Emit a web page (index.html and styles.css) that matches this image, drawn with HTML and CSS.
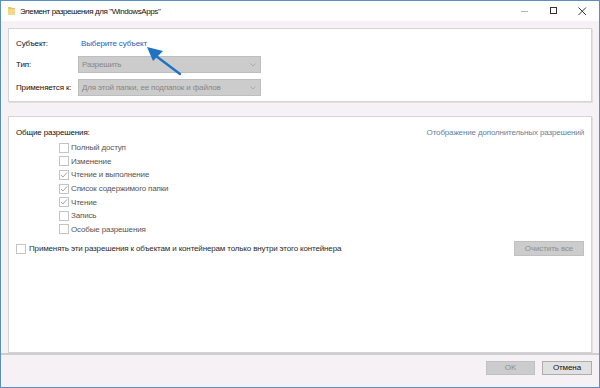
FILE: index.html
```html
<!DOCTYPE html>
<html lang="ru">
<head>
    <meta charset="UTF-8">
    <title>Элемент разрешения для "WindowsApps"</title>
    <link rel="stylesheet" href="styles.css">
</head>
<body>
<div class="window">
    <div class="titlebar">
        <svg class="folder" width="7" height="9" viewBox="0 0 7 9">
            <path d="M0 1 H3 L4 2 H7 V9 H0 Z" fill="#e9c46a"/>
            <path d="M0 3 H7 V9 H0 Z" fill="#f3d88c"/>
        </svg>
        <span class="title">Элемент разрешения для "WindowsApps"</span>
        <div class="controls">
            <span class="ctl">
                <svg width="8" height="8" viewBox="0 0 8 8"><path d="M0 4.5 H7" stroke="#b4b4b4" stroke-width="1"/></svg>
            </span>
            <span class="ctl">
                <svg width="8" height="8" viewBox="0 0 8 8"><rect x="0.5" y="0.5" width="6" height="6" fill="none" stroke="#333" stroke-width="1"/></svg>
            </span>
            <span class="ctl close">
                <svg width="9" height="9" viewBox="0 0 9 9"><path d="M0.5 0.5 L8 8 M8 0.5 L0.5 8" stroke="#333" stroke-width="1"/></svg>
            </span>
        </div>
    </div>

    <div class="content">
        <div class="panel panel-top">
            <div class="row row-first">
                <span class="label">Субъект:</span>
                <a class="link" href="#">Выберите субъект</a>
            </div>
            <div class="row">
                <span class="label">Тип:</span>
                <div class="select">
                    <span>Разрешить</span>
                    <svg width="6" height="4" viewBox="0 0 6 4"><path d="M0.5 0.5 L3 3 L5.5 0.5" fill="none" stroke="#a6a6a6" stroke-width="0.9"/></svg>
                </div>
            </div>
            <div class="row">
                <span class="label">Применяется к:</span>
                <div class="select">
                    <span>Для этой папки, ее подпапок и файлов</span>
                    <svg width="6" height="4" viewBox="0 0 6 4"><path d="M0.5 0.5 L3 3 L5.5 0.5" fill="none" stroke="#a6a6a6" stroke-width="0.9"/></svg>
                </div>
            </div>
        </div>

        <div class="panel panel-perms">
            <div class="perm-head">
                <span class="label">Общие разрешения:</span>
                <a class="link-muted" href="#">Отображение дополнительных разрешений</a>
            </div>
            <ul class="checks">
                <li><span class="box"></span>Полный доступ</li>
                <li><span class="box"></span>Изменение</li>
                <li><span class="box checked"><svg width="8" height="8" viewBox="0 0 8 8"><path d="M1 4 L3 6 L7 1.5" fill="none" stroke="#9a9a9a" stroke-width="0.9"/></svg></span>Чтение и выполнение</li>
                <li><span class="box checked"><svg width="8" height="8" viewBox="0 0 8 8"><path d="M1 4 L3 6 L7 1.5" fill="none" stroke="#9a9a9a" stroke-width="0.9"/></svg></span>Список содержимого папки</li>
                <li><span class="box checked"><svg width="8" height="8" viewBox="0 0 8 8"><path d="M1 4 L3 6 L7 1.5" fill="none" stroke="#9a9a9a" stroke-width="0.9"/></svg></span>Чтение</li>
                <li><span class="box"></span>Запись</li>
                <li><span class="box"></span>Особые разрешения</li>
            </ul>
            <div class="apply-row">
                <label class="apply"><span class="box"></span>Применять эти разрешения к объектам и контейнерам только внутри этого контейнера</label>
                <button class="btn btn-disabled btn-clear">Очистить все</button>
            </div>
        </div>
    </div>

    <div class="footer">
        <button class="btn btn-disabled btn-ok">OK</button>
        <button class="btn btn-cancel">Отмена</button>
    </div>

    <!-- стрелка-подсказка поверх окна -->
    <svg class="arrow" width="40" height="34" viewBox="0 0 40 34">
        <path d="M33 27 L9 9" stroke="#1f73c3" stroke-width="2.4" stroke-linecap="round"/>
        <path d="M0 0 L16 4 L6 14 Z" fill="#1f73c3"/>
    </svg>
</div>
</body>
</html>
```

FILE: styles.css
```css
/* окно свойств безопасности */
body {
    margin: 0;
    font-family: "Liberation Sans", Arial, sans-serif;
    font-size: 8px;
    letter-spacing: -0.15px;
    color: #111;
}

.window {
    position: relative;
    width: 600px;
    height: 388px;
    box-sizing: border-box;
    border: 1px solid #5a8fc2;
    background-color: #f5f1f5;
    display: flex;
    flex-direction: column;
}

.titlebar {
    height: 20px;
    background-color: #ffffff;
    display: flex;
    align-items: center;
    padding-left: 7px;
}

.folder {
    margin-right: 5px;
    margin-top: -1px;
}

.title {
    color: #111;
    letter-spacing: -0.4px;
}

.controls {
    margin-left: auto;
    display: flex;
    align-items: center;
    height: 100%;
}

.ctl {
    width: 29px;
    display: flex;
    justify-content: center;
    align-items: center;
}

.ctl.close {
    margin-right: 2px;
}

.content {
    padding: 7px 7px 0 7px;
    height: 332px;
    box-sizing: border-box;
}

.panel {
    background-color: #ffffff;
    border: 1px solid #d4d4d4;
    box-shadow: 1px 1px 0 #e2dee2;
}

.panel-top {
    height: 74px;
    box-sizing: border-box;
    padding: 6px 7px 0 7px;
}

.row {
    display: flex;
    align-items: center;
    height: 17px;
    margin-bottom: 6px;
    white-space: nowrap;
}

.row-first {
    margin-bottom: 4px;
}

.label {
    width: 62px;
    flex-shrink: 0;
    color: #111;
    white-space: nowrap;
}

.link {
    color: #1a64b6;
    text-decoration: none;
    margin-left: 3px;
}

.select {
    width: 183px;
    height: 17px;
    box-sizing: border-box;
    background-color: #cccccc;
    border: 1px solid #bebebe;
    color: #878787;
    display: flex;
    align-items: center;
    justify-content: space-between;
    padding: 0 4px 0 3px;
}

.panel-perms {
    margin-top: 14px;
    height: 237px;
    box-sizing: border-box;
    padding: 9px 7px 0 7px;
}

.perm-head {
    display: flex;
    justify-content: space-between;
    align-items: center;
    height: 13px;
}

.perm-head .label {
    width: auto;
}

.link-muted {
    color: #6a7f98;
    text-decoration: none;
}

.checks {
    list-style: none;
    margin: 2px 0 0 0;
    padding: 0 0 0 43px;
}

.checks li {
    height: 13.6px;
    display: flex;
    align-items: center;
    color: #555;
}

.box {
    width: 8px;
    height: 8px;
    border: 1px solid #c4c4c4;
    background-color: #ffffff;
    margin-right: 2px;
    display: inline-flex;
    align-items: center;
    justify-content: center;
    flex-shrink: 0;
}

.box svg {
    display: block;
}

.apply-row {
    display: flex;
    align-items: center;
    justify-content: space-between;
    margin-top: 5px;
    height: 15px;
}

.apply {
    display: flex;
    align-items: center;
    color: #2a2a2a;
}

.apply .box {
    margin-right: 3px;
}

.btn {
    font-family: inherit;
    font-size: 8px;
    letter-spacing: -0.1px;
    height: 14px;
    padding: 0;
    box-sizing: border-box;
    border: 1px solid #adadad;
    background-color: #e1e1e1;
    color: #111;
    line-height: 12px;
}

.btn-disabled {
    background-color: #cccccc;
    border-color: #c0c0c0;
    color: #8e8e8e;
}

.btn-clear {
    width: 70px;
    height: 15px;
}

.footer {
    flex: 1;
    border-top: 2px solid #d0cdd0;
    display: flex;
    justify-content: flex-end;
    align-items: flex-start;
    padding: 6px 7px 0 0;
    gap: 7px;
}

.btn-ok {
    width: 49px;
}

.btn-cancel {
    width: 50px;
}

.arrow {
    position: absolute;
    left: 146px;
    top: 46px;
}
```
